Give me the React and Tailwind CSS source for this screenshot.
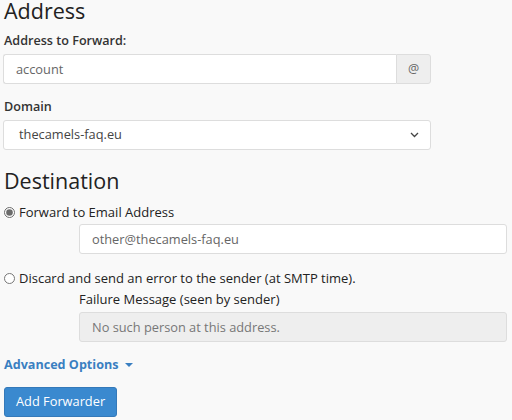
import React, { useState } from 'react';

const font = { fontFamily: '"Open Sans", "Liberation Sans", sans-serif' };

const App = () => {
  const [dest, setDest] = useState('forward');

  return (
    <div className="min-h-[420px] w-[512px] bg-[#f9f9f9] text-[#333] px-[3px] overflow-hidden" style={font}>
      <h2 className="text-[21.5px] leading-[22px] pl-[1px] font-normal text-[#222]">Address</h2>

      <label className="block mt-[10px] pl-[1px] text-[12.6px] leading-[18px] font-semibold text-[#333]">Address to Forward:</label>
      <div className="mt-[4px] flex w-[428px] h-[30px]">
        <input
          defaultValue="account"
          className="flex-1 min-w-0 h-full border border-[#ddd] border-r-0 rounded-l-[3px] bg-white px-[12px] text-[12.8px] text-[#666] outline-none"
        />
        <span className="w-[35px] h-full flex items-center justify-center border border-[#ddd] rounded-r-[3px] bg-[#eee] text-[12.5px] text-[#666]">@</span>
      </div>

      <label className="block mt-[14px] pl-[1px] text-[12.6px] leading-[18px] font-semibold text-[#333]">Domain</label>
      <div className="mt-[4px] relative w-[428px] h-[30px]">
        <div className="h-full border border-[#ddd] rounded-[3px] bg-white pl-[15px] flex items-center text-[12.8px] text-[#444]">thecamels-faq.eu</div>
        <svg className="absolute right-[12px] top-[12px]" width="9" height="6" viewBox="0 0 9 6" fill="none">
          <path d="M1 1l3.5 3.5L8 1" stroke="#444" strokeWidth="1.3" />
        </svg>
      </div>

      <h2 className="mt-[17px] text-[21.5px] leading-[28px] pl-[1px] font-normal text-[#222]">Destination</h2>

      <label className="mt-[7px] flex items-center gap-[4px] pl-[1px] text-[13px] leading-[20px] text-[#222]">
        <input
          type="radio"
          name="dest"
          checked={dest === 'forward'}
          onChange={() => setDest('forward')}
          className="w-[11px] h-[11px] m-0 accent-[#6b6b6b]"
        />
        Forward to Email Address
      </label>
      <input
        defaultValue="other@thecamels-faq.eu"
        className="block mt-[2px] ml-[76px] w-[428px] h-[30px] border border-[#ddd] rounded-[3px] bg-white px-[12px] text-[12.8px] text-[#666] outline-none"
      />

      <label className="mt-[14px] flex items-center gap-[4px] pl-[1px] text-[13px] leading-[20px] text-[#222]">
        <input
          type="radio"
          name="dest"
          checked={dest === 'discard'}
          onChange={() => setDest('discard')}
          className="w-[11px] h-[11px] m-0 accent-[#6b6b6b]"
        />
        Discard and send an error to the sender (at SMTP time).
      </label>
      <div className="ml-[76px] mt-[2px] text-[13px] leading-[18px] text-[#222]">Failure Message (seen by sender)</div>
      <input
        disabled
        defaultValue="No such person at this address."
        className="block mt-[4px] ml-[76px] w-[428px] h-[30px] border border-[#ddd] rounded-[3px] bg-[#eee] px-[12px] text-[12.8px] text-[#777] outline-none"
      />

      <button className="mt-[14px] flex items-center gap-[6px] pl-[1px] text-[12.6px] leading-[18px] font-bold text-[#3a7fc1]">
        Advanced Options
        <span className="w-0 h-0 border-x-[4px] border-x-transparent border-t-[4px] border-t-[#3a7fc1]" />
      </button>

      <button className="mt-[13px] ml-[1px] h-[30px] px-[11px] rounded-[3px] bg-[#3a89cf] border border-[#3479b9] text-white text-[12.8px]">
        Add Forwarder
      </button>
    </div>
  );
};

export default App;
